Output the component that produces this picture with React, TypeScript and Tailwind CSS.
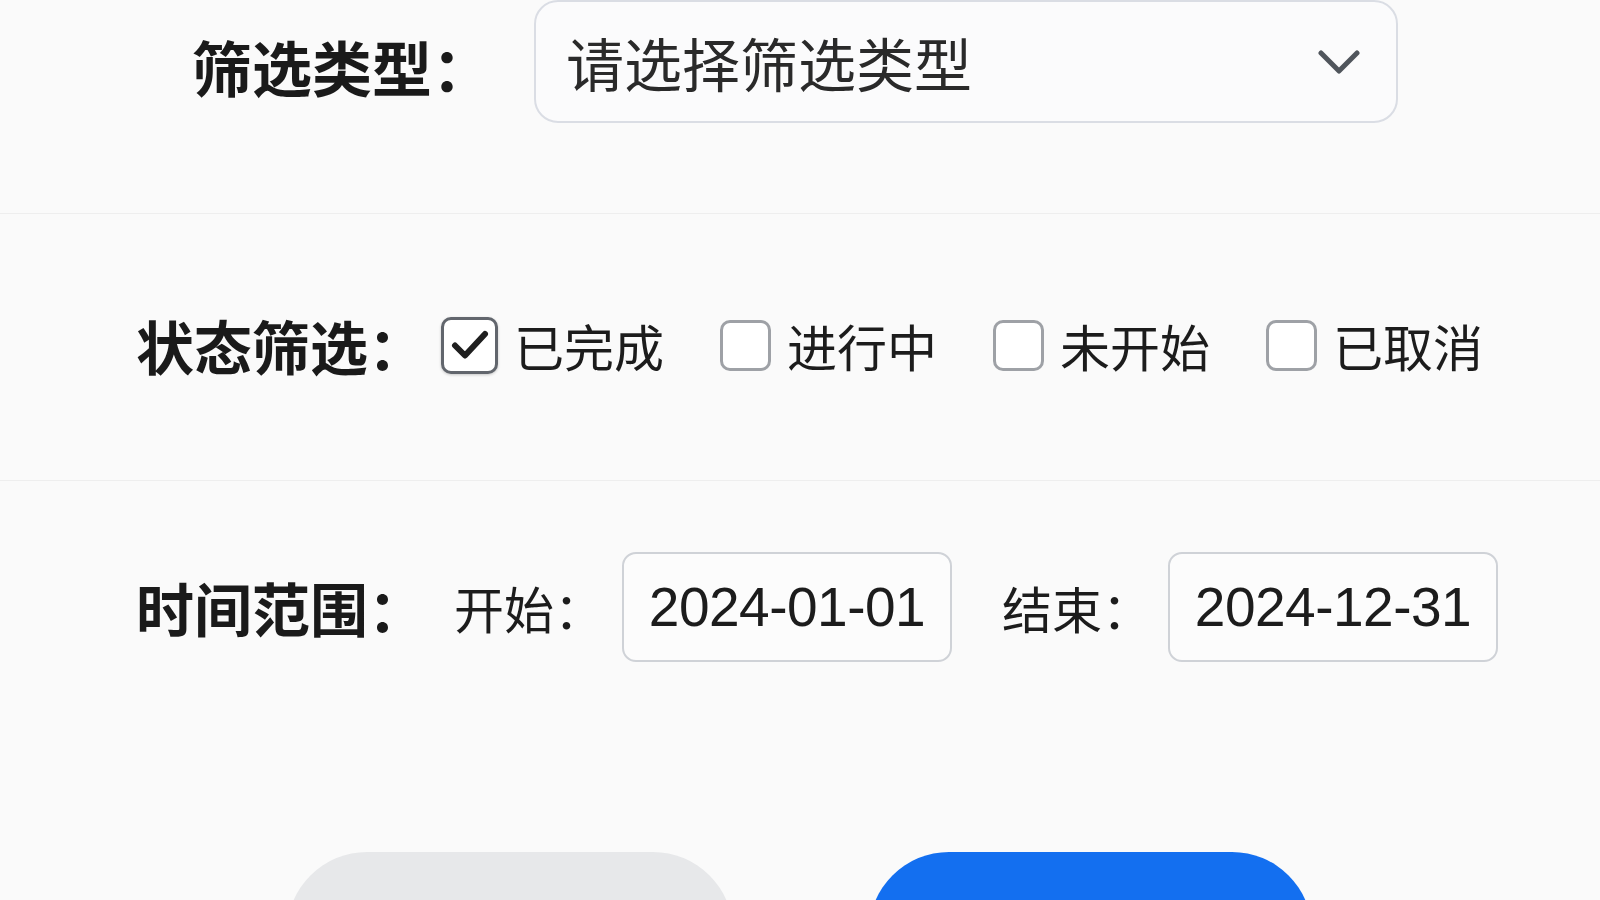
import React from 'react';

const options = [
  { label: '已完成', checked: true },
  { label: '进行中', checked: false },
  { label: '未开始', checked: false },
  { label: '已取消', checked: false },
];

const Checkbox = ({ checked }: { checked: boolean }) =>
  checked ? (
    <span className="flex h-[57px] w-[57px] shrink-0 items-center justify-center rounded-[10px] border-[3px] border-[#62666d] bg-white shadow-[0_1px_3px_rgba(0,0,0,0.2)]">
      <svg width="38" height="32" viewBox="0 0 38 32" fill="none">
        <path d="M4 16.5 L14 26.5 L34 5" stroke="#1f1f1f" strokeWidth="6" strokeLinecap="round" strokeLinejoin="round" />
      </svg>
    </span>
  ) : (
    <span className="h-[51px] w-[51px] shrink-0 rounded-[10px] border-[3px] border-[#9ea1a6] bg-white" />
  );

const DateBox = ({ value }: { value: string }) => (
  <div className="flex h-[110px] w-[330px] items-center justify-center rounded-[14px] border-2 border-[#cfd2d7] bg-[#fcfcfc] font-['Liberation_Sans',sans-serif] text-[55px] leading-none tracking-[-0.5px] text-[#1c1c1c]">
    {value}
  </div>
);

export default function App() {
  return (
    <div className="h-[900px] w-full overflow-hidden bg-[#fafafa] font-['Noto_Sans_CJK_SC','Liberation_Sans',sans-serif] text-[#1c1c1c]">
      {/* 筛选类型 */}
      <div className="flex h-[214px] items-start border-b border-[#eeeeee] pl-[192px]">
        <span className="mt-[36px] w-[342px] text-[60px] font-bold leading-none text-[#1a1a1a]">筛选类型：</span>
        <div className="flex h-[123px] w-[864px] items-center justify-between rounded-[24px] border-2 border-[#dadde4] bg-[#fbfbfc] pl-[30px] pr-[36px]">
          <span className="text-[58px] leading-none text-[#2a2a2a]">请选择筛选类型</span>
          <svg width="42" height="26" viewBox="0 0 42 26" fill="none">
            <path d="M3 4 L21 22 L39 4" stroke="#50555c" strokeWidth="5" strokeLinecap="round" strokeLinejoin="round" />
          </svg>
        </div>
      </div>

      {/* 状态筛选 */}
      <div className="h-[267px] border-b border-[#eeeeee] pl-[136px] pt-[101px]">
        <div className="flex h-[60px] items-center">
          <span className="w-[305px] text-[58px] font-bold leading-none text-[#1a1a1a]">状态筛选：</span>
          {options.map((o, i) => (
            <label key={o.label} className={`flex items-center gap-[16px] ${i > 0 ? 'ml-[56px]' : ''}`}>
              <Checkbox checked={o.checked} />
              <span className="text-[50px] leading-none text-[#1c1c1c]">{o.label}</span>
            </label>
          ))}
        </div>
      </div>

      {/* 时间范围 */}
      <div className="pl-[136px] pt-[71px]">
        <div className="flex h-[110px] items-center">
          <span className="w-[318px] text-[58px] font-bold leading-none text-[#1a1a1a]">时间范围：</span>
          <span className="w-[168px] text-[50px] leading-none">开始：</span>
          <DateBox value="2024-01-01" />
          <span className="ml-[50px] w-[166px] text-[50px] leading-none">结束：</span>
          <DateBox value="2024-12-31" />
        </div>
      </div>

      {/* 按钮 */}
      <div className="mt-[190px] flex gap-[136px] pl-[287px]">
        <button className="h-[160px] w-[446px] rounded-[80px] bg-[#e7e8ea]" />
        <button className="h-[160px] w-[443px] rounded-[80px] bg-[#136ff0]" />
      </div>
    </div>
  );
}
